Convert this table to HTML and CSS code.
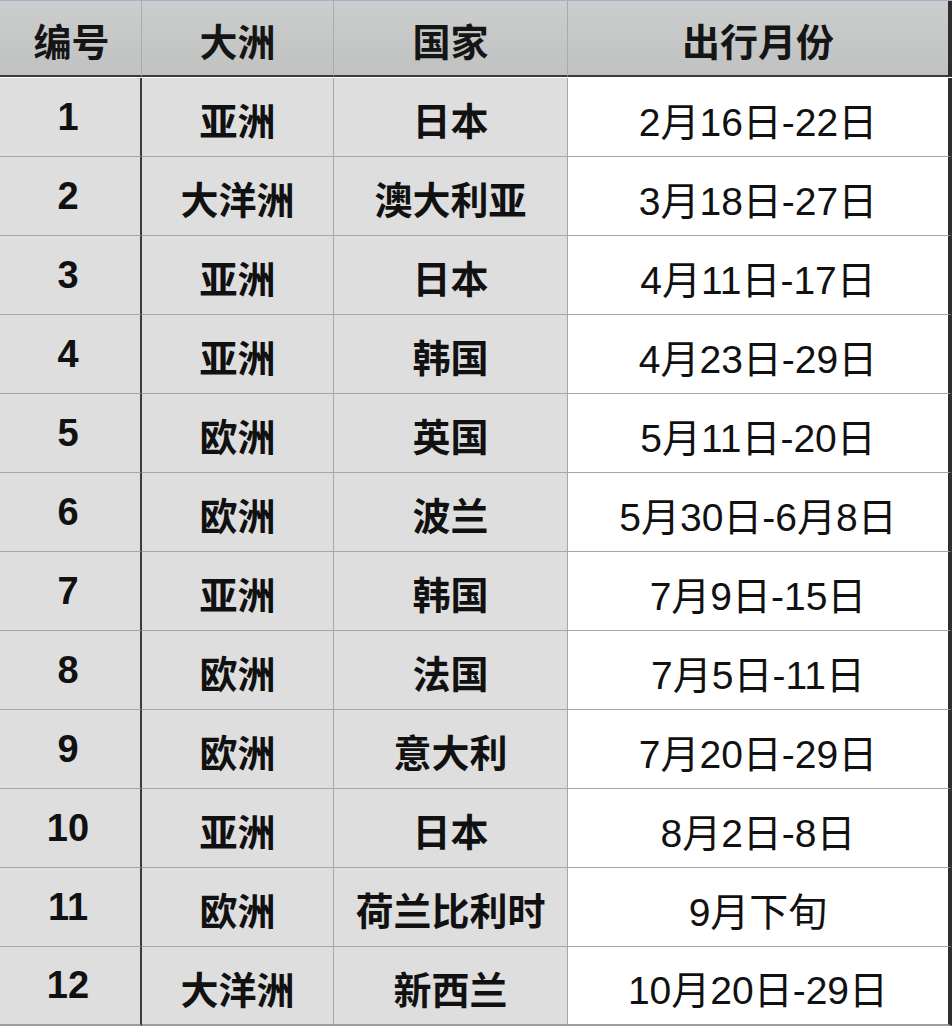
FILE: index.html
```html
<!DOCTYPE html>
<html lang="zh">
<head>
<meta charset="utf-8">
<title>出行月份</title>
<link rel="stylesheet" href="styles.css">
</head>
<body>
<div class="sheet">
  <div class="cell head c1">编号</div>
  <div class="cell head c2">大洲</div>
  <div class="cell head c3">国家</div>
  <div class="cell head c4">出行月份</div>

  <div class="cell c1 num">1</div><div class="cell c2">亚洲</div><div class="cell c3">日本</div><div class="cell c4 date">2月16日-22日</div>
  <div class="cell c1 num">2</div><div class="cell c2">大洋洲</div><div class="cell c3">澳大利亚</div><div class="cell c4 date">3月18日-27日</div>
  <div class="cell c1 num">3</div><div class="cell c2">亚洲</div><div class="cell c3">日本</div><div class="cell c4 date">4月11日-17日</div>
  <div class="cell c1 num">4</div><div class="cell c2">亚洲</div><div class="cell c3">韩国</div><div class="cell c4 date">4月23日-29日</div>
  <div class="cell c1 num">5</div><div class="cell c2">欧洲</div><div class="cell c3">英国</div><div class="cell c4 date">5月11日-20日</div>
  <div class="cell c1 num">6</div><div class="cell c2">欧洲</div><div class="cell c3">波兰</div><div class="cell c4 date">5月30日-6月8日</div>
  <div class="cell c1 num">7</div><div class="cell c2">亚洲</div><div class="cell c3">韩国</div><div class="cell c4 date">7月9日-15日</div>
  <div class="cell c1 num">8</div><div class="cell c2">欧洲</div><div class="cell c3">法国</div><div class="cell c4 date">7月5日-11日</div>
  <div class="cell c1 num">9</div><div class="cell c2">欧洲</div><div class="cell c3">意大利</div><div class="cell c4 date">7月20日-29日</div>
  <div class="cell c1 num">10</div><div class="cell c2">亚洲</div><div class="cell c3">日本</div><div class="cell c4 date">8月2日-8日</div>
  <div class="cell c1 num">11</div><div class="cell c2">欧洲</div><div class="cell c3">荷兰比利时</div><div class="cell c4 date">9月下旬</div>
  <div class="cell c1 num last">12</div><div class="cell c2 last">大洋洲</div><div class="cell c3 last">新西兰</div><div class="cell c4 date last">10月20日-29日</div>
</div>
</body>
</html>
```

FILE: styles.css
```css
html, body {
  margin: 0;
  padding: 0;
  background: #ffffff;
}

.sheet {
  width: 952px;
  display: grid;
  grid-template-columns: 142px 192px 234px 384px;
  grid-auto-rows: 79px;
  grid-template-rows: 77px;
  border-top: 1px solid #a3b2c9;
  box-sizing: border-box;
  font-family: "Liberation Sans", "Noto Sans CJK SC", sans-serif;
  color: #111111;
}

.cell {
  box-sizing: border-box;
  display: flex;
  align-items: center;
  justify-content: center;
  padding-top: 3px;
  font-size: 38px;
  font-weight: 700;
  background: #dedede;
  border-bottom: 1px solid #a6a6a6;
  border-right: 1px solid #a6a6a6;
  white-space: nowrap;
}

.head {
  height: 76px;
  background: linear-gradient(#cbcecd, #bfc2c1);
  border-bottom: 2px solid #3a3a3a;
  border-right: 1px solid #a9acab;
  color: #151515;
}

.c1 {
  border-right: 2px solid #3a3a3a;
}

.head.c1 {
  border-right: 1px solid #a9acab;
  padding-left: 2px;
}

.num {
  font-size: 38px;
  padding-right: 4px;
  padding-top: 0;
}

.c4 {
  border-right: 4px solid #2e2e2e;
}

.head.c4 {
  border-right: 4px solid #2e2e2e;
}

.date {
  background: #ffffff;
  font-weight: 400;
  font-size: 39px;
  color: #111111;
}

.last {
  border-bottom: 2px solid #9c9c9c;
}
```
